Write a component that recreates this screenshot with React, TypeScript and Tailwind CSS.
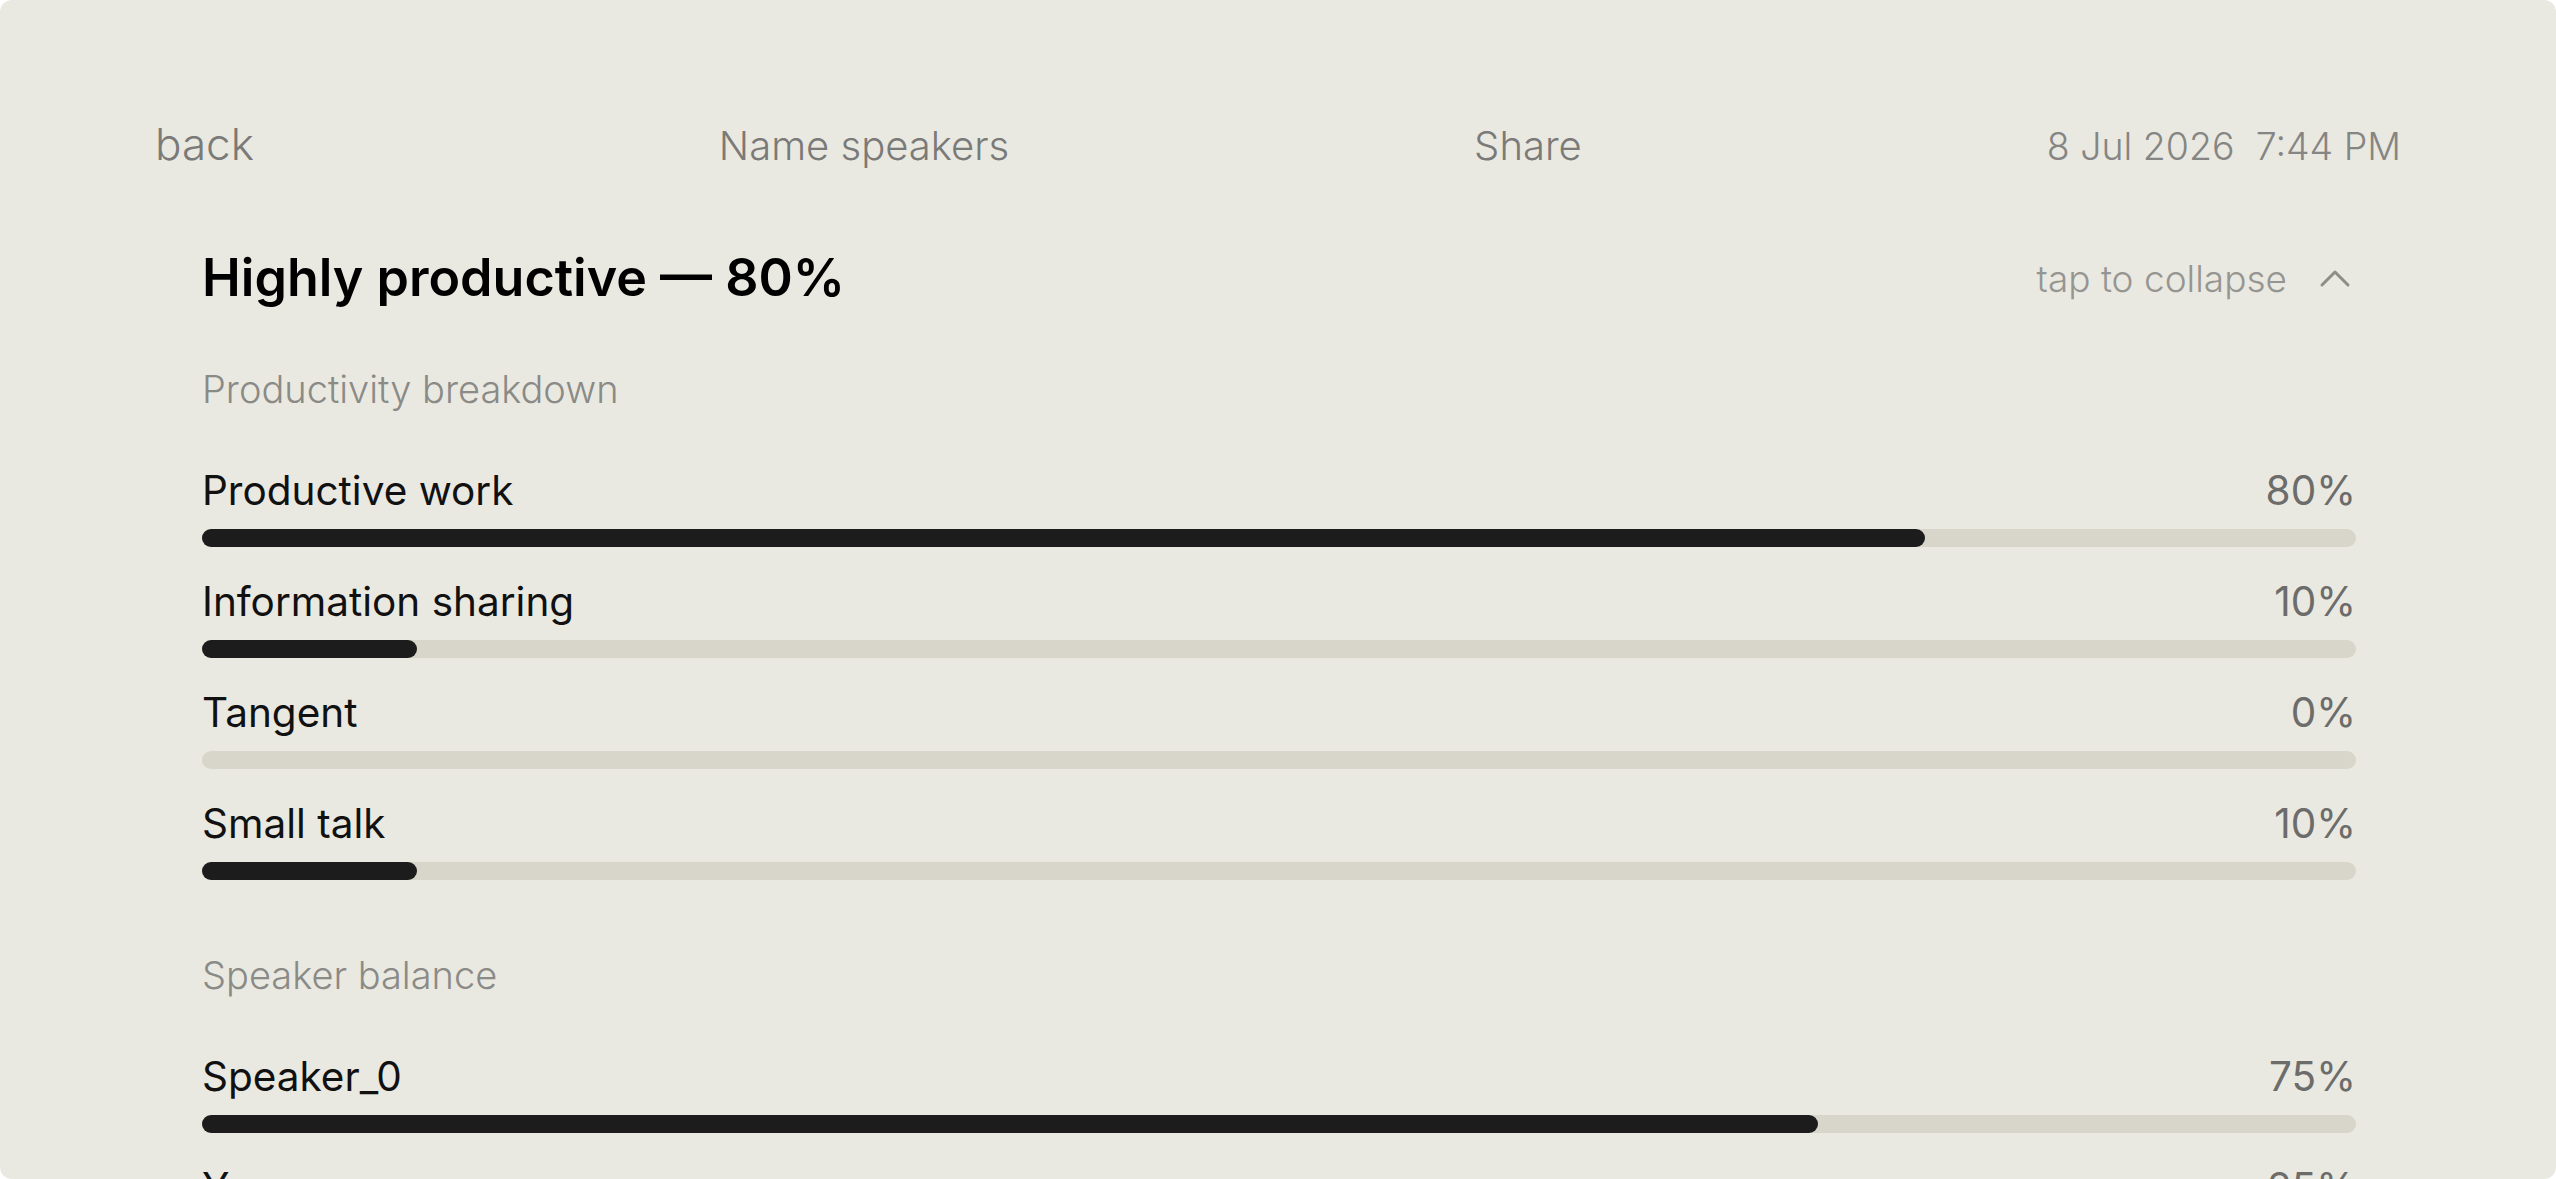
import React from "react";

type Row = { label: string; value: number };

const breakdown: Row[] = [
  { label: "Productive work", value: 80 },
  { label: "Information sharing", value: 10 },
  { label: "Tangent", value: 0 },
  { label: "Small talk", value: 10 },
];

const speakers: Row[] = [
  { label: "Speaker_0", value: 75 },
  { label: "You", value: 25 },
];

function ChevronUp() {
  return (
    <svg width="32" height="20" viewBox="0 0 32 20" fill="none" className="shrink-0">
      <path
        d="M3 17 L16 4 L29 17"
        stroke="#8d8d8a"
        strokeWidth="3"
        strokeLinecap="round"
        strokeLinejoin="round"
      />
    </svg>
  );
}

function StatRow({ row }: { row: Row }) {
  return (
    <div className="flex flex-col">
      <div className="flex items-baseline justify-between text-[40.5px] leading-[40px]">
        <span className="text-[#111111]">{row.label}</span>
        <span className="text-[#6c6c6a]">{row.value}%</span>
      </div>
      <div className="mt-[18px] h-[18px] w-full rounded-full bg-[#d8d6cb]">
        <div
          className="h-full rounded-full bg-[#1c1c1c]"
          style={{ width: `${row.value}%` }}
        />
      </div>
    </div>
  );
}

function Section({ title, rows }: { title: string; rows: Row[] }) {
  return (
    <section className="flex flex-col">
      <h3 className="text-[38px] font-light leading-none text-[#8a8a87]">{title}</h3>
      <div className="mt-[63px] flex flex-col gap-[35px]">
        {rows.map((r) => (
          <StatRow key={r.label} row={r} />
        ))}
      </div>
    </section>
  );
}

export default function App() {
  return (
    <div
      className="h-[1179px] w-full overflow-hidden bg-white"
      style={{ fontFamily: "Inter, 'Noto Sans', sans-serif" }}
    >
      <div className="h-full overflow-hidden rounded-[12px] bg-[#eae9e1] pt-[122px]">
        {/* top bar */}
        <nav className="flex items-baseline justify-between px-[155px] font-light leading-none text-[#7a7a78]">
          <button className="text-[44px] leading-none">back</button>
          <button className="text-[40px] leading-none">Name speakers</button>
          <button className="text-[40px] leading-none">Share</button>
          <span className="whitespace-pre text-[37.5px] leading-none text-[#858583]">
            8 Jul 2026  7:44 PM
          </span>
        </nav>

        <main className="px-[200px] pl-[202px]">
          {/* summary header */}
          <div className="mt-[86px] flex items-center justify-between">
            <h1 className="text-[52px] font-semibold leading-none text-black">
              Highly productive — 80%
            </h1>
            <button className="flex items-center gap-[32px] pr-[5px] text-[37px] font-light leading-none text-[#959592]">
              <span>tap to collapse</span>
              <ChevronUp />
            </button>
          </div>

          <div className="mt-[66px] flex flex-col gap-[76px]">
            <Section title="Productivity breakdown" rows={breakdown} />
            <Section title="Speaker balance" rows={speakers} />
          </div>
        </main>
      </div>
    </div>
  );
}
